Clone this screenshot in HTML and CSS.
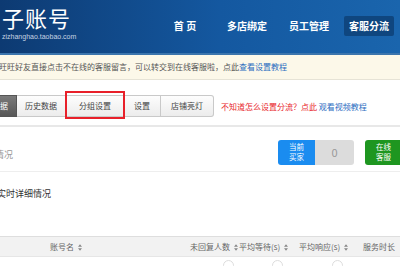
FILE: index.html
```html
<!DOCTYPE html>
<html lang="zh-CN">
<head>
    <meta charset="UTF-8">
    <meta name="viewport" content="width=device-width, initial-scale=1.0">
    <title>子账号 - 客服分流</title>
    <link rel="stylesheet" href="styles.css">
</head>
<body>
    <header class="top">
        <div class="brand">
            <div class="brand-name">子账号</div>
            <div class="brand-url">zizhanghao.taobao.com</div>
        </div>
        <nav class="nav">
            <a class="nav-item">首 页</a>
            <a class="nav-item">多店绑定</a>
            <a class="nav-item">员工管理</a>
            <a class="nav-item active">客服分流</a>
        </nav>
    </header>

    <!-- notice -->
    <div class="notice">
        旺旺好友直接点击不在线的客服留言，可以转交到在线客服啦，点此<a class="link">查看设置教程</a>
    </div>

    <!-- tabs -->
    <div class="tabs-row">
        <div class="tabs">
            <a class="tab current">实时数据</a>
            <a class="tab">历史数据</a>
            <a class="tab tab-marked">分组设置</a>
            <a class="tab tab-set">设置</a>
            <a class="tab tab-last">店铺亮灯</a>
        </div>
        <div class="help">不知道怎么设置分流？点此 <a class="link">观看视频教程</a></div>
    </div>

    <main class="panel">
        <div class="panel-head">
            <div class="panel-title">当前情况</div>
            <div class="stats">
                <div class="stat">
                    <span class="stat-label">当前<br>买家</span>
                    <span class="stat-value">0</span>
                </div>
                <div class="stat stat-online">
                    <span class="stat-label">在线<br>客服</span>
                    <span class="stat-value">0</span>
                </div>
            </div>
        </div>

        <div class="section-title">实时详细情况</div>

        <div class="table">
            <div class="thead">
                <div class="th col-name">账号名 <svg class="sort" viewBox="0 0 5 8"><path d="M2.5 0 5 3H0z M2.5 8 0 5h5z"/></svg></div>
                <div class="th col-unreply">未回复人数 <svg class="sort" viewBox="0 0 5 8"><path d="M2.5 0 5 3H0z M2.5 8 0 5h5z"/></svg></div>
                <div class="th col-wait">平均等待(s) <svg class="sort" viewBox="0 0 5 8"><path d="M2.5 0 5 3H0z M2.5 8 0 5h5z"/></svg></div>
                <div class="th col-resp">平均响应(s) <svg class="sort" viewBox="0 0 5 8"><path d="M2.5 0 5 3H0z M2.5 8 0 5h5z"/></svg></div>
                <div class="th col-time">服务时长</div>
            </div>
            <div class="tr">
                <div class="td col-name"></div>
                <div class="td col-unreply"><span class="dot"></span></div>
                <div class="td col-wait"><span class="dot"></span></div>
                <div class="td col-resp"><span class="dot"></span></div>
                <div class="td col-time"></div>
            </div>
        </div>
    </main>
</body>
</html>
```

FILE: styles.css
```css
body {
    font-family: "Noto Sans CJK SC", "Noto Sans", sans-serif;
    margin: 0;
    padding: 0;
    width: 400px;
    height: 266px;
    overflow: hidden;
    background-color: #fff;
    color: #333;
}

a {
    text-decoration: none;
    cursor: pointer;
}

/* header */
.top {
    height: 53px;
    display: flex;
    align-items: flex-start;
    background: linear-gradient(to right, #0d3a72, #1458a0 55%, #1a65ad);
    border-bottom: 2px solid #3b75ad;
}

.brand {
    padding: 3px 0 0 2px;
    width: 152px;
}

.brand-name {
    color: #fff;
    font-size: 22px;
    line-height: 28px;
    letter-spacing: 1px;
}

.brand-url {
    color: #c6d3e3;
    font-family: "Liberation Sans", Arial, sans-serif;
    font-size: 7px;
    line-height: 10px;
    margin-top: 1px;
}

.nav {
    display: flex;
    padding-top: 16px;
}

.nav-item {
    color: #fff;
    font-size: 10px;
    font-weight: bold;
    width: 62px;
    height: 20px;
    line-height: 20px;
    text-align: center;
}

.nav-item.active {
    width: 50px;
    margin-left: 4px;
    background-color: #0f467f;
    border-radius: 2px;
}

/* notice */
.notice {
    height: 24px;
    line-height: 24px;
    background-color: #fcf8e9;
    border-bottom: 1px solid #e6e3d6;
    font-size: 8px;
    color: #555;
    white-space: nowrap;
    margin-left: -1px;
}

.link {
    color: #2b6cbf;
}

/* tabs */
.tabs-row {
    display: flex;
    align-items: center;
    padding: 15px 0 8px;
    border-bottom: 2px solid #e8e8e8;
}

.tabs {
    display: flex;
    margin-left: -32px;
}

.tab {
    height: 20px;
    line-height: 20px;
    padding: 0 8px;
    font-size: 8px;
    color: #444;
    background: linear-gradient(#fdfdfd, #ececec);
    border: 1px solid #c9c9c9;
    border-left: none;
    white-space: nowrap;
}

.tab.current {
    color: #fff;
    background: linear-gradient(#7a7a7a, #575757);
    border-color: #555;
}

.tab-marked {
    position: relative;
    padding: 0 12px 0 13px;
}

/* red annotation box drawn over the tab */
.tab-marked::after {
    content: "";
    position: absolute;
    left: -1px;
    right: -2px;
    top: -5px;
    bottom: -3px;
    border: 2px solid #e8202a;
}

.tab-set {
    padding: 0 10px;
}

.tab-last {
    padding: 0 10px;
    border-radius: 0 3px 3px 0;
}

.help {
    margin-left: 7px;
    font-size: 8px;
    color: #e8262c;
    white-space: nowrap;
}

/* panel */
.panel-head {
    display: flex;
    align-items: center;
    justify-content: space-between;
    padding: 13px 0 6px;
    border-bottom: 1px solid #eee;
}

.panel-title {
    margin-left: -23px;
    font-size: 9px;
    color: #999;
    padding-top: 4px;
}

.stats {
    display: flex;
    gap: 11px;
    margin-right: -41px;
}

.stat {
    display: flex;
    height: 25px;
    border-radius: 3px;
    overflow: hidden;
}

.stat-label {
    width: 37px;
    background-color: #1a8cf0;
    color: #fff;
    font-size: 7.5px;
    line-height: 10px;
    text-align: center;
    padding-top: 2px;
}

.stat-value {
    width: 39px;
    background-color: #dcdcdc;
    color: #999;
    font-size: 11px;
    line-height: 25px;
    text-align: center;
}

.stat-online .stat-label {
    background-color: #1e9620;
}

.section-title {
    margin: 14px 0 0 -3px;
    font-size: 9px;
    line-height: 16px;
    color: #333;
}

/* table */
.table {
    margin-top: 34px;
    font-size: 8px;
    color: #666;
}

.thead,
.tr {
    display: flex;
}

.thead {
    height: 19px;
    line-height: 19px;
    background-color: #f2f2f2;
    border-top: 1px solid #dedede;
    border-bottom: 1px solid #e6e6e6;
}

.th,
.td {
    white-space: nowrap;
}

.col-name {
    width: 140px;
    padding-left: 50px;
}

.col-unreply {
    width: 47px;
    padding-left: 0;
}

.col-wait {
    width: 58px;
    padding-left: 2px;
}

.col-resp {
    width: 61px;
    padding-left: 2px;
}

.col-time {
    flex: 1;
    padding-left: 3px;
}

.sort {
    width: 4px;
    height: 7px;
    fill: #888;
    vertical-align: -1px;
    margin-left: 2px;
}

.tr {
    height: 10px;
    padding-top: 3px;
}

.dot {
    display: block;
    width: 9px;
    height: 9px;
    margin-left: 33px;
    border: 1px solid #ddd;
    border-radius: 50%;
}
```
